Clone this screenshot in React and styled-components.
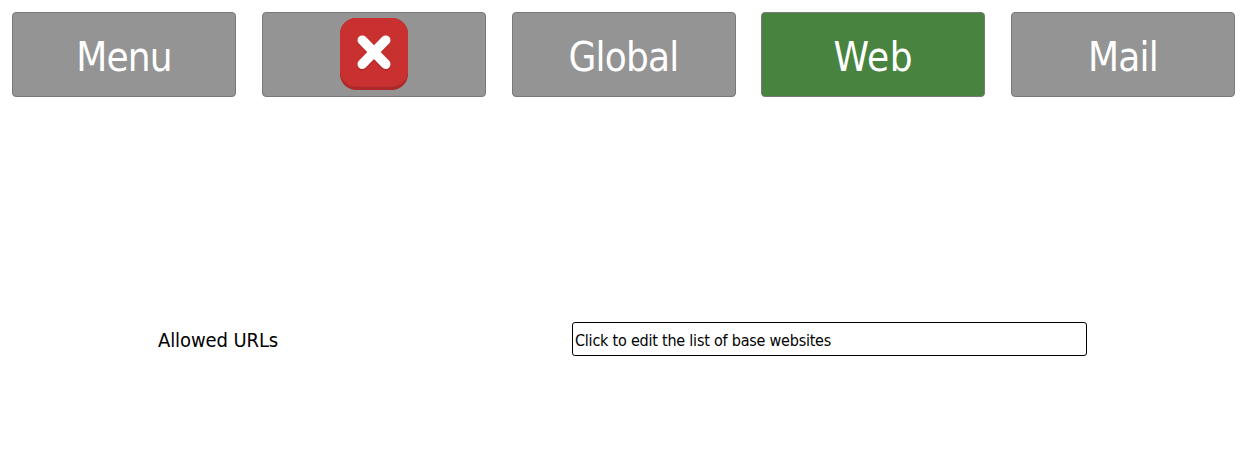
import React from "react";
import styled, { createGlobalStyle } from "styled-components";

const GlobalStyle = createGlobalStyle`
  * { box-sizing: border-box; }
  body { margin: 0; background: #fff; }
`;

const Page = styled.main`
  width: 1246px;
  height: 466px;
  padding: 12px 11px 0 12px;
  font-family: Tahoma, "DejaVu Sans Condensed", "DejaVu Sans", sans-serif;
  font-stretch: condensed;
  color: #000;
`;

const Toolbar = styled.nav`
  display: flex;
  justify-content: space-between;
`;

const ToolButton = styled.button`
  display: flex;
  align-items: center;
  justify-content: center;
  width: 224px;
  height: 85px;
  padding: ${(p) => (p.$icon ? "0 0 1px" : "5px 0 0")};
  border: 1px solid #797979;
  border-radius: 4px;
  background: ${(p) => (p.$active ? "#48843f" : "#949494")};
  color: #fff;
  font: inherit;
  font-size: 40px;
  line-height: 48px;
  letter-spacing: ${(p) => p.$tracking || 0}px;
`;

const Row = styled.section`
  display: flex;
  align-items: center;
  margin-top: 225px;
  padding-left: 146px;
`;

const Label = styled.label`
  width: 414px;
  padding-top: 1px;
  font-size: 20px;
  line-height: 24px;
  white-space: nowrap;
  letter-spacing: -0.1px;
`;

const Field = styled.div`
  width: 515px;
  height: 34px;
  padding: 2px 2px 0;
  border: 1px solid #000;
  border-radius: 3px;
  font-size: 16px;
  line-height: 32px;
  white-space: nowrap;
  letter-spacing: -0.22px;
`;

const CloseIcon = () => (
  <svg width="68" height="72" viewBox="0 0 68 72" aria-hidden="true">
    <rect width="68" height="72" rx="16" fill="#ae2a2a" />
    <rect width="68" height="68.5" rx="16" fill="#c93030" />
    <path d="M22.3 24L45.7 48.2M45.7 24L22.3 48.2" stroke="#b52b2b" strokeWidth="9.6" strokeLinecap="round" />
    <path d="M22.3 22.2L45.7 46.2M45.7 22.2L22.3 46.2" stroke="#fff" strokeWidth="9.6" strokeLinecap="round" />
  </svg>
);

export default function App() {
  return (
    <>
      <GlobalStyle />
      <Page>
        <Toolbar>
          <ToolButton $tracking={-0.8}>Menu</ToolButton>
          <ToolButton $icon aria-label="Close"><CloseIcon /></ToolButton>
          <ToolButton $tracking={-0.8}>Global</ToolButton>
          <ToolButton $active $tracking={0.5}>Web</ToolButton>
          <ToolButton $tracking={-0.8}>Mail</ToolButton>
        </Toolbar>
        <Row>
          <Label>Allowed URLs</Label>
          <Field>Click to edit the list of base websites</Field>
        </Row>
      </Page>
    </>
  );
}
